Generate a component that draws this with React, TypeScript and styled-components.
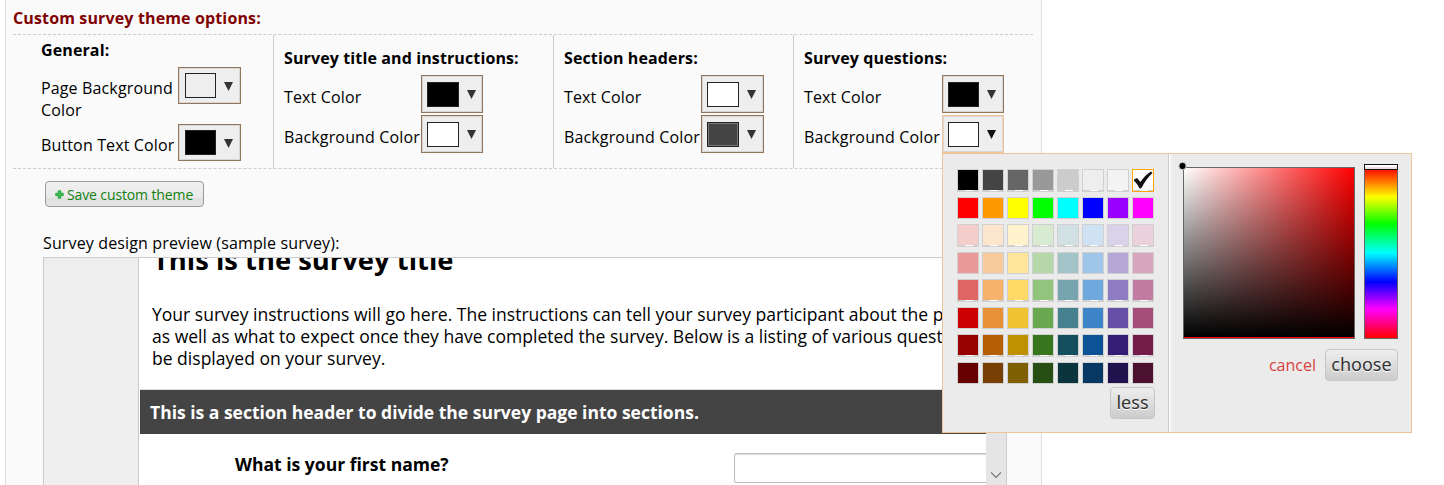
import React from 'react';
import styled, { createGlobalStyle } from 'styled-components';

const GlobalStyle = createGlobalStyle`
  * { box-sizing: border-box; }
  html, body { margin: 0; background: #fff; overflow: hidden; }
  body { font-family: "Open Sans", "Noto Sans", sans-serif; font-size: 16px; line-height: 22px; color: #000; }
  h2, h3, p { margin: 0; font-size: inherit; }
`;

const Page = styled.main`
  position: relative;
  width: 1444px;
  height: 485px;
  overflow: hidden;
`;

const Panel = styled.section`
  width: 1037px;
  height: 485px;
  margin-left: 5px;
  padding: 7px 8px 0 7px;
  border: 1px solid #ddd;
  border-width: 0 1px;
  background: #fafafa;
  overflow: hidden;
`;

const PanelTitle = styled.h2`
  height: 27px;
  color: #800000;
  font-weight: 700;
  letter-spacing: 0.14px;
  white-space: nowrap;
`;

const Options = styled.div`
  display: grid;
  grid-template-columns: 261px 280px 240px 239px;
  grid-template-rows: 133px;
  width: 1020px;
  height: 135px;
  border: 1px dashed #ccc;
  border-width: 1px 0;
  letter-spacing: 0.14px;
`;

const Group = styled.div<{ $general?: boolean }>`
  padding: ${p => (p.$general ? '4px 0 0 28px' : '12px 0 0 10px')};
  border-right: 1px solid #ccc;
  &:last-child { border-right: 0; }
`;

const GroupTitle = styled.h3`
  height: 28px;
  font-weight: 700;
  letter-spacing: 0.12px;
  white-space: nowrap;
`;

const OptionRow = styled.div<{ $general?: boolean; $label: number }>`
  display: grid;
  grid-template-columns: ${p => p.$label}px auto;
  justify-content: start;
  height: ${p => (p.$general ? 57 : 40)}px;
`;

const OptionLabel = styled.span<{ $general?: boolean }>`
  padding-top: ${p => (p.$general ? 10 : 11)}px;
  white-space: pre;
`;

const Picker = styled.button<{ $w: number; $general?: boolean; $active?: boolean }>`
  display: flex;
  align-items: flex-start;
  gap: 8px;
  width: ${p => p.$w}px;
  height: ${p => (p.$general ? 37 : 38)}px;
  padding: ${p => (p.$general ? '5px 0 0 6px' : '6px 0 0 5px')};
  border: 1px solid ${p => (p.$active ? '#f0c49b' : '#91765d')};
  box-shadow: inset 0 0 0 1px #dcd6d2;
  background: #eee;
`;

const Preview = styled.span<{ $c: string; $w: number }>`
  width: ${p => p.$w}px;
  height: 25px;
  border: 1px solid #222;
  background: ${p => p.$c};
  box-shadow: inset 0 0 0 1px ${p => (p.$c === '#444' ? '#777' : p.$c)};
`;

const Arrow = styled.svg<{ $general?: boolean }>`
  width: 9px;
  height: 9px;
  margin-top: ${p => (p.$general ? 9 : 8)}px;
`;

const SaveButton = styled.button`
  display: flex;
  align-items: center;
  gap: 3px;
  width: 159px;
  height: 26px;
  margin: 12px 0 0 32px;
  padding: 1px 0 0 9px;
  border: 1px solid #999;
  border-radius: 4px;
  background: linear-gradient(#f0f0f0, #e9e9e9 65%, #dfdfdf 66%, #e6e6e6);
  color: #118011;
  font: 14px/20px "Open Sans", sans-serif;
  letter-spacing: -0.12px;
  white-space: nowrap;
`;

const PreviewLabel = styled.p`
  margin: 25px 0 3px 30px;
  letter-spacing: 0.14px;
`;

const SurveyFrame = styled.div`
  display: grid;
  grid-template-columns: 96px 1fr 20px;
  width: 964px;
  height: 240px;
  margin-left: 30px;
  border: 1px solid #ccc;
  background: #eee;
`;

const Survey = styled.article`
  min-width: 0;
  border-left: 1px solid #ccc;
  padding-left: 1px;
  margin-left: -2px;
  background: #fff;
  overflow: hidden;
`;

const SurveyTitle = styled.h2`
  height: 46px;
  margin-top: -13px;
  padding-left: 13px;
  font-size: 27.4px;
  line-height: 29px;
  white-space: nowrap;
`;

const Instructions = styled.p`
  height: 99px;
  padding: 11.6px 0 0 12px;
  border-bottom: 1px solid #ddd;
  font-size: 17.55px;
  line-height: 22.4px;
  white-space: pre;
`;

const SectionHeader = styled.h3`
  height: 44px;
  padding-left: 10px;
  background: #444;
  color: #fff;
  font-size: 17.5px;
  line-height: 44px;
`;

const Question = styled.div`
  display: grid;
  grid-template-columns: 499px 300px;
  padding: 19px 0 0 95px;
  font-size: 17.55px;
  font-weight: 700;
`;

const Input = styled.div`
  height: 30px;
  border: 1px solid #bbb;
  border-radius: 2px;
  box-shadow: inset 0 1px 1px #ddd;
`;

const ScrollBar = styled.div`
  padding: 214px 0 0 5px;
  background: #e5e5e5;
  svg { display: block; }
`;

const Popup = styled.div`
  position: absolute;
  left: 942px;
  top: 153px;
  display: grid;
  grid-template-columns: 226px 1fr;
  width: 470px;
  height: 280px;
  border: 1px solid #f0c49b;
  background: #ebebeb;
`;

const PalettePane = styled.div`
  padding: 15px 0 0 14px;
  border-right: 1px solid #ccc;
`;

const PaletteRow = styled.div`
  display: flex;
  gap: 3px;
  margin-bottom: 5px;
`;

const Swatch = styled.span<{ $c: string; $tall: boolean; $on: boolean }>`
  width: 22px;
  height: ${p => (p.$tall ? 23 : 22)}px;
  border: 1px solid ${p => (p.$on ? '#ffa500' : '#d0d0d0')};
  background: ${p =>
    p.$tall
      ? `linear-gradient(${p.$c}, ${p.$c}) 0 0 / 20px 20px no-repeat, linear-gradient(#fff, #fff) 7px 20px / 8px 1px no-repeat, #d0d0d0`
      : p.$c};
  svg { display: block; }
`;

const SmallButton = styled.button<{ $w: number }>`
  width: ${p => p.$w}px;
  height: 32px;
  padding: 0 0 3px;
  border: 1px solid #c6c6c6;
  border-radius: 4px;
  background: linear-gradient(#eee, #ccc);
  color: #333;
  font: 18px/26px "Noto Sans", sans-serif;
  text-shadow: 0 1px 0 #fff;
`;

const PaletteFooter = styled.div`
  display: flex;
  justify-content: flex-end;
  margin-top: -2px;
  padding-right: 13px;
`;

const ColorPane = styled.div`
  padding: 13px 0 0 14px;
  box-shadow: inset 1px 0 0 #fff, inset 4px 0 2px -1px #f3f3f3;
`;

const Fields = styled.div`
  display: flex;
  gap: 9px;
`;

const Saturation = styled.div`
  position: relative;
  width: 172px;
  height: 172px;
  border: 1px solid #666;
  background:
    linear-gradient(red, red) 0 169px / 100% 1px no-repeat,
    linear-gradient(to top, #000, transparent) 0 0 / 100% 169px no-repeat,
    linear-gradient(to right, #fff, transparent) 0 0 / 100% 169px no-repeat,
    red;
`;

const Handle = styled.svg`
  position: absolute;
  left: -7px;
  top: -7px;
`;

const Hue = styled.div`
  position: relative;
  width: 34px;
  height: 172px;
  border: 1px solid #666;
  background: linear-gradient(red, #ff0 17%, #0f0 33%, #0ff 50%, #00f 67%, #f0f 83%, red);
`;

const HueHandle = styled.span`
  position: absolute;
  left: -1px;
  top: -4px;
  width: 34px;
  height: 6px;
  border: 1px solid #111;
  background: linear-gradient(#fff 50%, #f1dede 50%);
`;

const Actions = styled.div`
  display: flex;
  justify-content: flex-end;
  gap: 9px;
  margin-top: 10px;
  padding-right: 13px;
`;

const Cancel = styled.span`
  padding-top: 5px;
  color: #d93f3f;
  font-size: 16px;
`;

type Option = { label: string; color: string; active?: boolean };
type GroupData = { title: string; label: number; width: number; swatch: number; options: Option[] };

const groups: GroupData[] = [
  { title: 'General:', label: 137, width: 63, swatch: 31, options: [{ label: 'Page Background\nColor', color: '#eee' }, { label: 'Button Text Color', color: '#000' }] },
  { title: 'Survey title and instructions:', label: 137, width: 62, swatch: 32, options: [{ label: 'Text Color', color: '#000' }, { label: 'Background Color', color: '#fff' }] },
  { title: 'Section headers:', label: 137, width: 63, swatch: 32, options: [{ label: 'Text Color', color: '#fff' }, { label: 'Background Color', color: '#444' }] },
  { title: 'Survey questions:', label: 138, width: 62, swatch: 31, options: [{ label: 'Text Color', color: '#000' }, { label: 'Background Color', color: '#fff', active: true }] },
];

const palette = [
  ['#000', '#444', '#666', '#999', '#ccc', '#eee', '#f3f3f3', '#fff'],
  ['#f00', '#f90', '#ff0', '#0f0', '#0ff', '#00f', '#90f', '#f0f'],
  ['#f4cccc', '#fce5cd', '#fff2cc', '#d9ead3', '#d0e0e3', '#cfe2f3', '#d9d2e9', '#ead1dc'],
  ['#ea9999', '#f9cb9c', '#ffe599', '#b6d7a8', '#a2c4c9', '#9fc5e8', '#b4a7d6', '#d5a6bd'],
  ['#e06666', '#f6b26b', '#ffd966', '#93c47d', '#76a5af', '#6fa8dc', '#8e7cc3', '#c27ba0'],
  ['#c00', '#e69138', '#f1c232', '#6aa84f', '#45818e', '#3d85c6', '#674ea7', '#a64d79'],
  ['#900', '#b45f06', '#bf9000', '#38761d', '#134f5c', '#0b5394', '#351c75', '#741b47'],
  ['#600', '#783f04', '#7f6000', '#274e13', '#0c343d', '#073763', '#20124d', '#4c1130'],
];

export default function App() {
  return (
    <Page>
      <GlobalStyle />
      <Panel>
        <PanelTitle>Custom survey theme options:</PanelTitle>
        <Options>
          {groups.map((g, gi) => {
            const general = gi === 0;
            return (
              <Group key={g.title} $general={general}>
                <GroupTitle>{g.title}</GroupTitle>
                {g.options.map(o => (
                  <OptionRow key={o.label} $general={general} $label={g.label}>
                    <OptionLabel $general={general}>{o.label}</OptionLabel>
                    <Picker $w={g.width} $general={general} $active={o.active}>
                      <Preview $c={o.color} $w={g.swatch} />
                      <Arrow $general={general} viewBox="0 0 9 9"><path d="M0 0H9L4.5 9Z" fill={o.active ? '#111' : '#333'} /></Arrow>
                    </Picker>
                  </OptionRow>
                ))}
              </Group>
            );
          })}
        </Options>
        <SaveButton>
          <svg width="9" height="9" viewBox="0 0 9 9"><path d="M3.500 1H5.500V3.500H8V5.500H5.500V8H3.500V5.500H1V3.500H3.500Z" fill="#4fc45a" stroke="#35ad48" strokeWidth="1.500" strokeLinejoin="round" /></svg>
          Save custom theme
        </SaveButton>
        <PreviewLabel>Survey design preview (sample survey):</PreviewLabel>
        <SurveyFrame>
          <span />
          <Survey>
            <SurveyTitle>This is the survey title</SurveyTitle>
            <Instructions>{'Your survey instructions will go here. The instructions can tell your survey participant about the purpose of the survey,\nas well as what to expect once they have completed the survey. Below is a listing of various question types that can\nbe displayed on your survey.'}</Instructions>
            <SectionHeader>This is a section header to divide the survey page into sections.</SectionHeader>
            <Question>
              <label>What is your first name?</label>
              <Input />
            </Question>
          </Survey>
          <ScrollBar>
            <svg width="10" height="7" viewBox="0 0 10 7"><path d="M0 .5L5 5.500L10 .5" fill="none" stroke="#777" strokeWidth="1.200" /></svg>
          </ScrollBar>
        </SurveyFrame>
      </Panel>
      <Popup>
        <PalettePane>
          {palette.map((row, r) => (
            <PaletteRow key={r}>
              {row.map(c => (
                <Swatch key={c} $c={c} $tall={r % 2 === 0} $on={c === '#fff'}>
                  {c === '#fff' && (
                    <svg width="20" height="20" viewBox="0 0 20 20"><path d="M1 9.500L4 8L7.500 12Q12 5 18 1.500L19.500 3Q13 9 8.500 18L6.500 18.500Q4 13 1 11Z" fill="#111" /></svg>
                  )}
                </Swatch>
              ))}
            </PaletteRow>
          ))}
          <PaletteFooter><SmallButton $w={45}>less</SmallButton></PaletteFooter>
        </PalettePane>
        <ColorPane>
          <Fields>
            <Saturation>
              <Handle width="12" height="12" viewBox="0 0 12 12"><circle cx="5.500" cy="5" r="3.700" fill="#000" stroke="#ddd" /></Handle>
            </Saturation>
            <Hue><HueHandle /></Hue>
          </Fields>
          <Actions>
            <Cancel>cancel</Cancel>
            <SmallButton $w={73}>choose</SmallButton>
          </Actions>
        </ColorPane>
      </Popup>
    </Page>
  );
}
